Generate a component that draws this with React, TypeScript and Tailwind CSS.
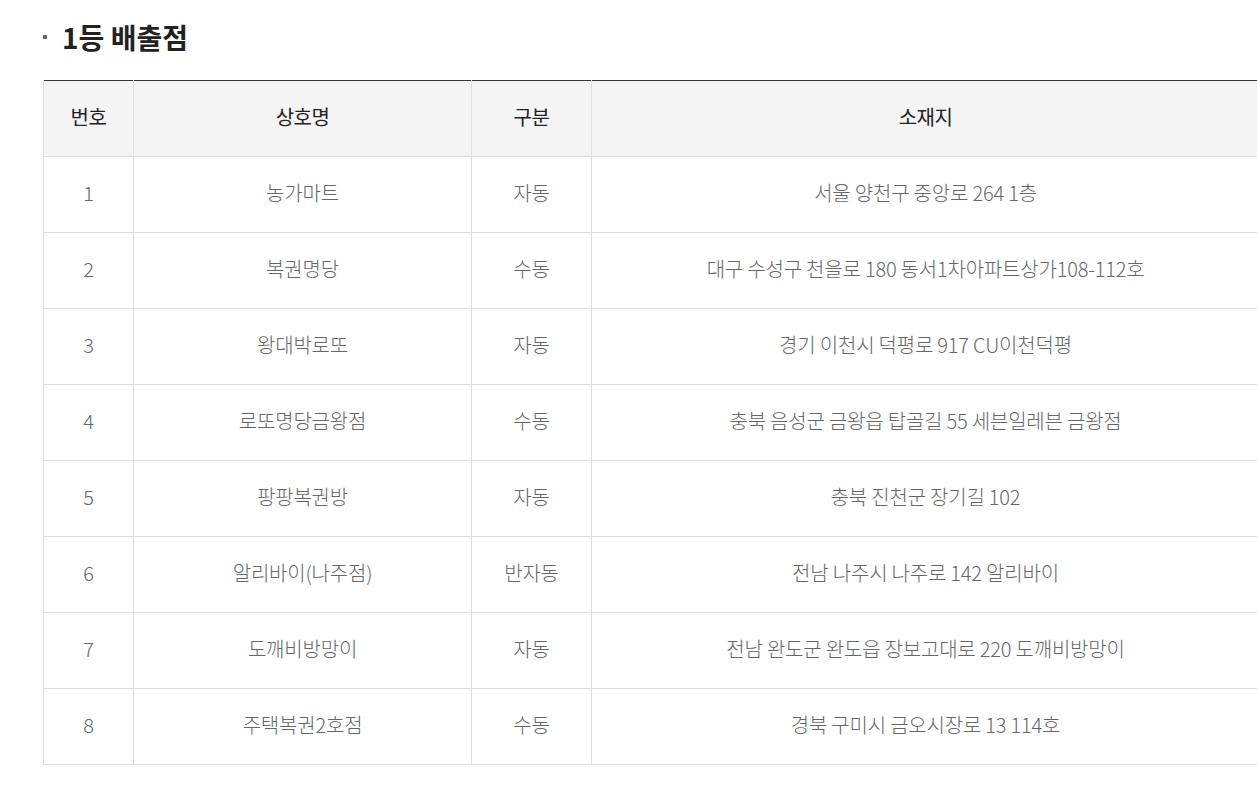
const rows = [
  { no: 1, name: "농가마트", type: "자동", addr: "서울 양천구 중앙로 264 1층" },
  { no: 2, name: "복권명당", type: "수동", addr: "대구 수성구 천을로 180 동서1차아파트상가108-112호" },
  { no: 3, name: "왕대박로또", type: "자동", addr: "경기 이천시 덕평로 917 CU이천덕평" },
  { no: 4, name: "로또명당금왕점", type: "수동", addr: "충북 음성군 금왕읍 탑골길 55 세븐일레븐 금왕점" },
  { no: 5, name: "팡팡복권방", type: "자동", addr: "충북 진천군 장기길 102" },
  { no: 6, name: "알리바이(나주점)", type: "반자동", addr: "전남 나주시 나주로 142 알리바이" },
  { no: 7, name: "도깨비방망이", type: "자동", addr: "전남 완도군 완도읍 장보고대로 220 도깨비방망이" },
  { no: 8, name: "주택복권2호점", type: "수동", addr: "경북 구미시 금오시장로 13 114호" },
];

const App = () => {
  return (
    <div className="w-[1257px] h-[786px] overflow-hidden bg-white font-['Noto_Sans_CJK_KR','Noto_Sans',sans-serif]">
      <div className="pl-[43px] pt-[17px]">
        {/* Title */}
        <h2 className="flex items-center h-[40px] text-[28px] font-bold text-[#222]">
          <span className="w-[4px] h-[4px] bg-[#666] mr-[15px]" />
          1등 배출점
        </h2>

        {/* Table */}
        <table className="mt-[23px] w-[1216px] border-collapse table-fixed border-t border-t-[#333]">
          <colgroup>
            <col className="w-[90px]" />
            <col className="w-[338px]" />
            <col className="w-[120px]" />
            <col />
          </colgroup>
          <thead>
            <tr className="h-[76px] bg-[#f4f4f4] text-[20px] leading-[20px] text-[#222] tracking-[-0.5px]">
              <th className="pb-[4px] font-normal border-l border-b border-r border-[#ddd]">번호</th>
              <th className="pb-[4px] font-normal border-b border-r border-[#ddd]">상호명</th>
              <th className="pb-[4px] font-normal border-b border-r border-[#ddd]">구분</th>
              <th className="pb-[4px] font-normal border-b border-[#ddd]">소재지</th>
            </tr>
          </thead>
          <tbody>
            {rows.map((r) => (
              <tr key={r.no} className="h-[76px] text-[20px] leading-[20px] text-[#666] font-light tracking-[-0.2px]">
                <td className="pb-[4px] text-center border-l border-b border-r border-[#ddd]">{r.no}</td>
                <td className="pb-[4px] text-center border-b border-r border-[#ddd]">{r.name}</td>
                <td className="pb-[4px] text-center border-b border-r border-[#ddd]">{r.type}</td>
                <td className="pb-[4px] text-center border-b border-[#ddd]">{r.addr}</td>
              </tr>
            ))}
          </tbody>
        </table>
      </div>
    </div>
  );
};

export default App;
